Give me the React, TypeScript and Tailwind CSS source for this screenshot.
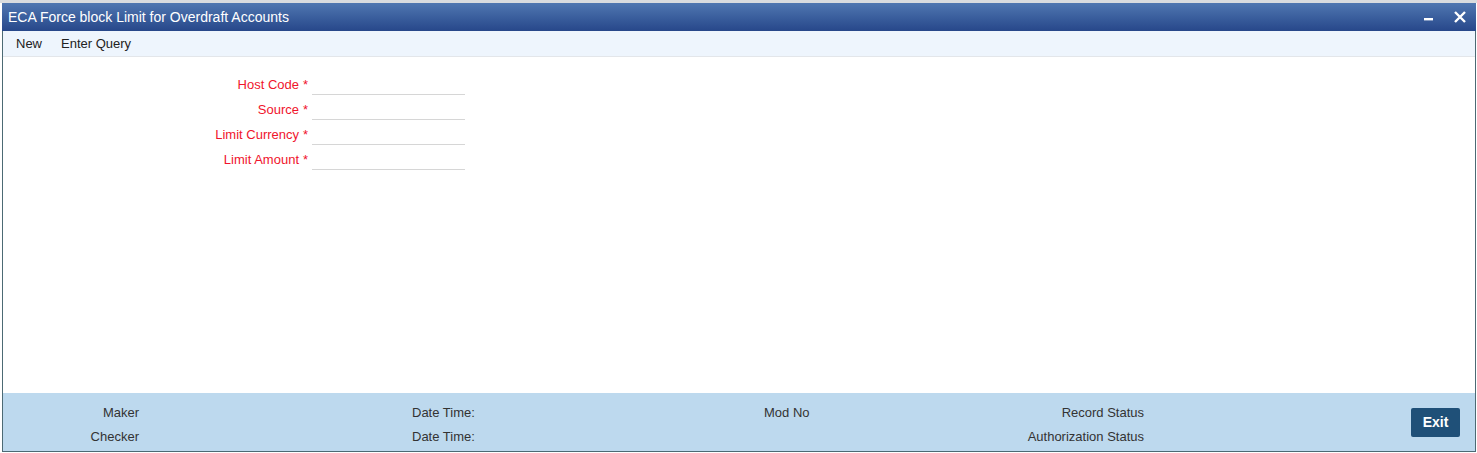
const fields = ["Host Code", "Source", "Limit Currency", "Limit Amount"];

const App = () => {
    return (
        <div className="w-[1477px] h-[453px] bg-white pl-[2px] pr-[1px] pt-[3px] font-['Liberation_Sans',Arial,sans-serif] overflow-hidden relative">
            <div className="absolute top-0 left-0 right-0 h-[3px] bg-[#d9dcdf]" />
            {/* WINDOW */}
            <div className="h-[449px] flex flex-col border-x border-b border-[#4c6a74]">
                {/* TITLE */}
                <div className="h-[28px] -mx-px flex items-center justify-between bg-gradient-to-b from-[#5077b1] to-[#27478a] pl-[6px] pr-[10px]">
                    <span className="text-white text-[14px] leading-none">ECA Force block Limit for Overdraft Accounts</span>
                    <div className="flex items-center gap-[20px]">
                        <svg width="10" height="10" viewBox="0 0 10 10">
                            <rect x="0" y="6" width="9" height="2.4" fill="#fff" />
                        </svg>
                        <svg width="12" height="12" viewBox="0 0 12 12">
                            <path d="M1 1 L11 11 M11 1 L1 11" stroke="#fff" strokeWidth="2.4" />
                        </svg>
                    </div>
                </div>

                {/* TOOLBAR */}
                <div className="h-[26px] flex items-center gap-[19px] pl-[13px] bg-[#eef5fd] border-b border-[#e3e6ea] text-[13px] text-[#222]">
                    <span>New</span>
                    <span>Enter Query</span>
                </div>

                {/* FORM */}
                <div className="flex-1 pt-[14px]">
                    {fields.map((label) => (
                        <div key={label} className="flex h-[25px] text-[13px] text-[#f0142c]">
                            <span className="w-[296px] text-right leading-[25px] pt-px">{label}</span>
                            <span className="w-[9px] ml-[4px] leading-[25px] pt-px">*</span>
                            <div className="w-[153px] h-[24px] border-b border-[#d6d6d6]" />
                        </div>
                    ))}
                </div>

                {/* FOOTER */}
                <div className="h-[58px] bg-[#bdd9ee] flex items-center text-[13px] text-[#333]">
                    <div className="flex pt-[8px] self-start leading-[24px]">
                        <div className="w-[136px] flex flex-col items-end">
                            <span>Maker</span>
                            <span>Checker</span>
                        </div>
                        <div className="ml-[273px] w-[150px] flex flex-col">
                            <span>Date Time:</span>
                            <span>Date Time:</span>
                        </div>
                        <div className="ml-[202px] w-[100px] flex flex-col">
                            <span>Mod No</span>
                        </div>
                        <div className="w-[280px] flex flex-col items-end">
                            <span>Record Status</span>
                            <span>Authorization Status</span>
                        </div>
                    </div>
                    <button className="ml-[267px] w-[49px] h-[29px] rounded-[2px] bg-[#1f5078] text-white font-bold text-[14px]">
                        Exit
                    </button>
                </div>
            </div>
        </div>
    );
};

export default App;
